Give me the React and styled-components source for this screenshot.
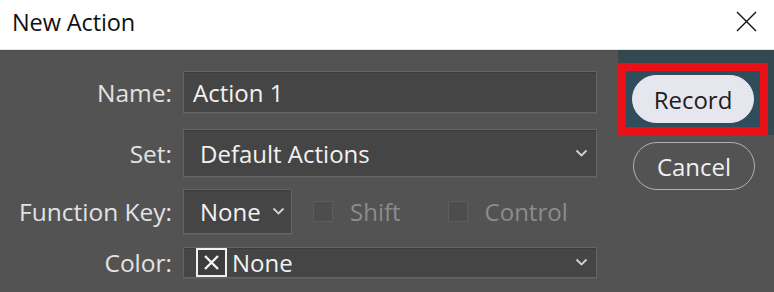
import React from 'react'
import styled, { createGlobalStyle } from 'styled-components'

const GlobalStyle = createGlobalStyle`
  html, body {
    margin: 0;
    padding: 0;
    background: #535353;
  }
  body {
    width: 774px;
    height: 292px;
    overflow: hidden;
    font-family: 'Open Sans', 'Noto Sans', sans-serif;
  }
`

const Dialog = styled.div`
  width: 774px;
  height: 292px;
  background: #535353;
  display: flex;
  flex-direction: column;
`

const TitleBar = styled.div`
  height: 50px;
  background: #ffffff;
  display: flex;
  align-items: center;
  justify-content: space-between;
  padding: 0 17px 6px 12px;
  box-sizing: border-box;
  border-bottom: 1px solid #e4e4e4;
`

const Title = styled.div`
  font-size: 23.5px;
  color: #111;
  letter-spacing: -0.1px;
`

const CloseButton = styled.div`
  width: 22px;
  height: 22px;
  display: flex;
  align-items: center;
  justify-content: center;
`

const Body = styled.div`
  flex: 1;
  display: flex;
  align-items: flex-start;
`

const Form = styled.div`
  width: 597px;
  padding-top: 21px;
  display: flex;
  flex-direction: column;
`

const Row = styled.div`
  display: flex;
  align-items: center;
  gap: 11px;
  margin-bottom: ${props => props.gap || 12}px;
`

const Label = styled.div`
  width: 172px;
  text-align: right;
  font-size: 24.5px;
  color: #e2e2e2;
  flex-shrink: 0;
  white-space: nowrap;
`

const Field = styled.div`
  flex: ${props => (props.fixed ? '0 0 auto' : '1')};
  width: ${props => (props.fixed ? props.fixed + 'px' : 'auto')};
  height: ${props => props.h}px;
  box-sizing: border-box;
  background: #454545;
  border: 1px solid #646464;
  box-shadow: inset 0 1px 0 #3c3c3c, 0 1px 0 #5c5c5c;
  display: flex;
  align-items: center;
  padding: 0 ${props => props.pr || 9}px 0 ${props => props.pl || 9}px;
  font-size: 24px;
  color: #f2f2f2;
`

const Value = styled.span`
  flex: 1;
  white-space: nowrap;
`

const Chevron = styled.svg`
  width: 13px;
  height: 9px;
  flex-shrink: 0;
`

const CheckGroup = styled.div`
  display: flex;
  align-items: center;
  margin-left: ${props => props.ml}px;
`

const CheckBox = styled.div`
  width: 20px;
  height: 21px;
  box-sizing: border-box;
  background: #4d4d4d;
  border: 1px solid #5d5d5d;
  margin-right: 17px;
`

const CheckLabel = styled.span`
  font-size: 24px;
  color: #8c8c8c;
`

const Swatch = styled.div`
  width: 31px;
  height: 29px;
  box-sizing: border-box;
  border: 2px solid #f0f0f0;
  background: #3d3d3d;
  display: flex;
  align-items: center;
  justify-content: center;
  margin-right: 5px;
`

const Actions = styled.div`
  margin-left: 21px;
  display: flex;
  flex-direction: column;
`

const FocusArea = styled.div`
  background: #34494f;
  padding: 13px 6px 0 0;
`

const Highlight = styled.div`
  width: 150px;
  height: 72px;
  box-sizing: border-box;
  border: 8px solid #ea1018;
  background: #2f4d5a;
  display: flex;
  align-items: center;
  justify-content: center;
`

const Pill = styled.div`
  width: 122px;
  height: 48px;
  box-sizing: border-box;
  border-radius: 24px;
  display: flex;
  align-items: center;
  justify-content: center;
  font-size: 24px;
  background: ${props => (props.primary ? '#e6e6ef' : 'transparent')};
  color: ${props => (props.primary ? '#1d1d1d' : '#f0f0f0')};
  border: 1px solid ${props => (props.primary ? '#e6e6ef' : '#b0b0b0')};
`

const CancelWrap = styled.div`
  margin: 7px 0 0 15px;
`

const ChevronIcon = () => (
  <Chevron viewBox='0 0 13 9'>
    <path d='M1.5 1.5 L6.5 6.5 L11.5 1.5' fill='none' stroke='#d2d2d2' strokeWidth='1.8' />
  </Chevron>
)

export default function App() {
  return (
    <Dialog>
      <GlobalStyle />
      <TitleBar>
        <Title>New Action</Title>
        <CloseButton>
          <svg width='21' height='21' viewBox='0 0 21 21'>
            <path d='M1 1 L20 20 M20 1 L1 20' stroke='#111' strokeWidth='1.4' />
          </svg>
        </CloseButton>
      </TitleBar>
      <Body>
        <Form>
          <Row gap={16}>
            <Label>Name:</Label>
            <Field h={42}>
              <Value>Action 1</Value>
            </Field>
          </Row>
          <Row>
            <Label>Set:</Label>
            <Field h={48} pl={16} pr={8}>
              <Value>Default Actions</Value>
              <ChevronIcon />
            </Field>
          </Row>
          <Row>
            <Label>Function Key:</Label>
            <Field fixed={109} h={45} pl={16} pr={6}>
              <Value>None</Value>
              <ChevronIcon />
            </Field>
            <CheckGroup ml={10}>
              <CheckBox />
              <CheckLabel>Shift</CheckLabel>
            </CheckGroup>
            <CheckGroup ml={36}>
              <CheckBox />
              <CheckLabel>Control</CheckLabel>
            </CheckGroup>
          </Row>
          <Row>
            <Label>Color:</Label>
            <Field h={31} pl={12} pr={8}>
              <Swatch>
                <svg width='17' height='17' viewBox='0 0 17 17'>
                  <path d='M2 2 L15 15 M15 2 L2 15' stroke='#f4f4f4' strokeWidth='2.4' />
                </svg>
              </Swatch>
              <Value>None</Value>
              <ChevronIcon />
            </Field>
          </Row>
        </Form>
        <Actions>
          <FocusArea>
            <Highlight>
              <Pill primary>Record</Pill>
            </Highlight>
          </FocusArea>
          <CancelWrap>
            <Pill>Cancel</Pill>
          </CancelWrap>
        </Actions>
      </Body>
    </Dialog>
  )
}
